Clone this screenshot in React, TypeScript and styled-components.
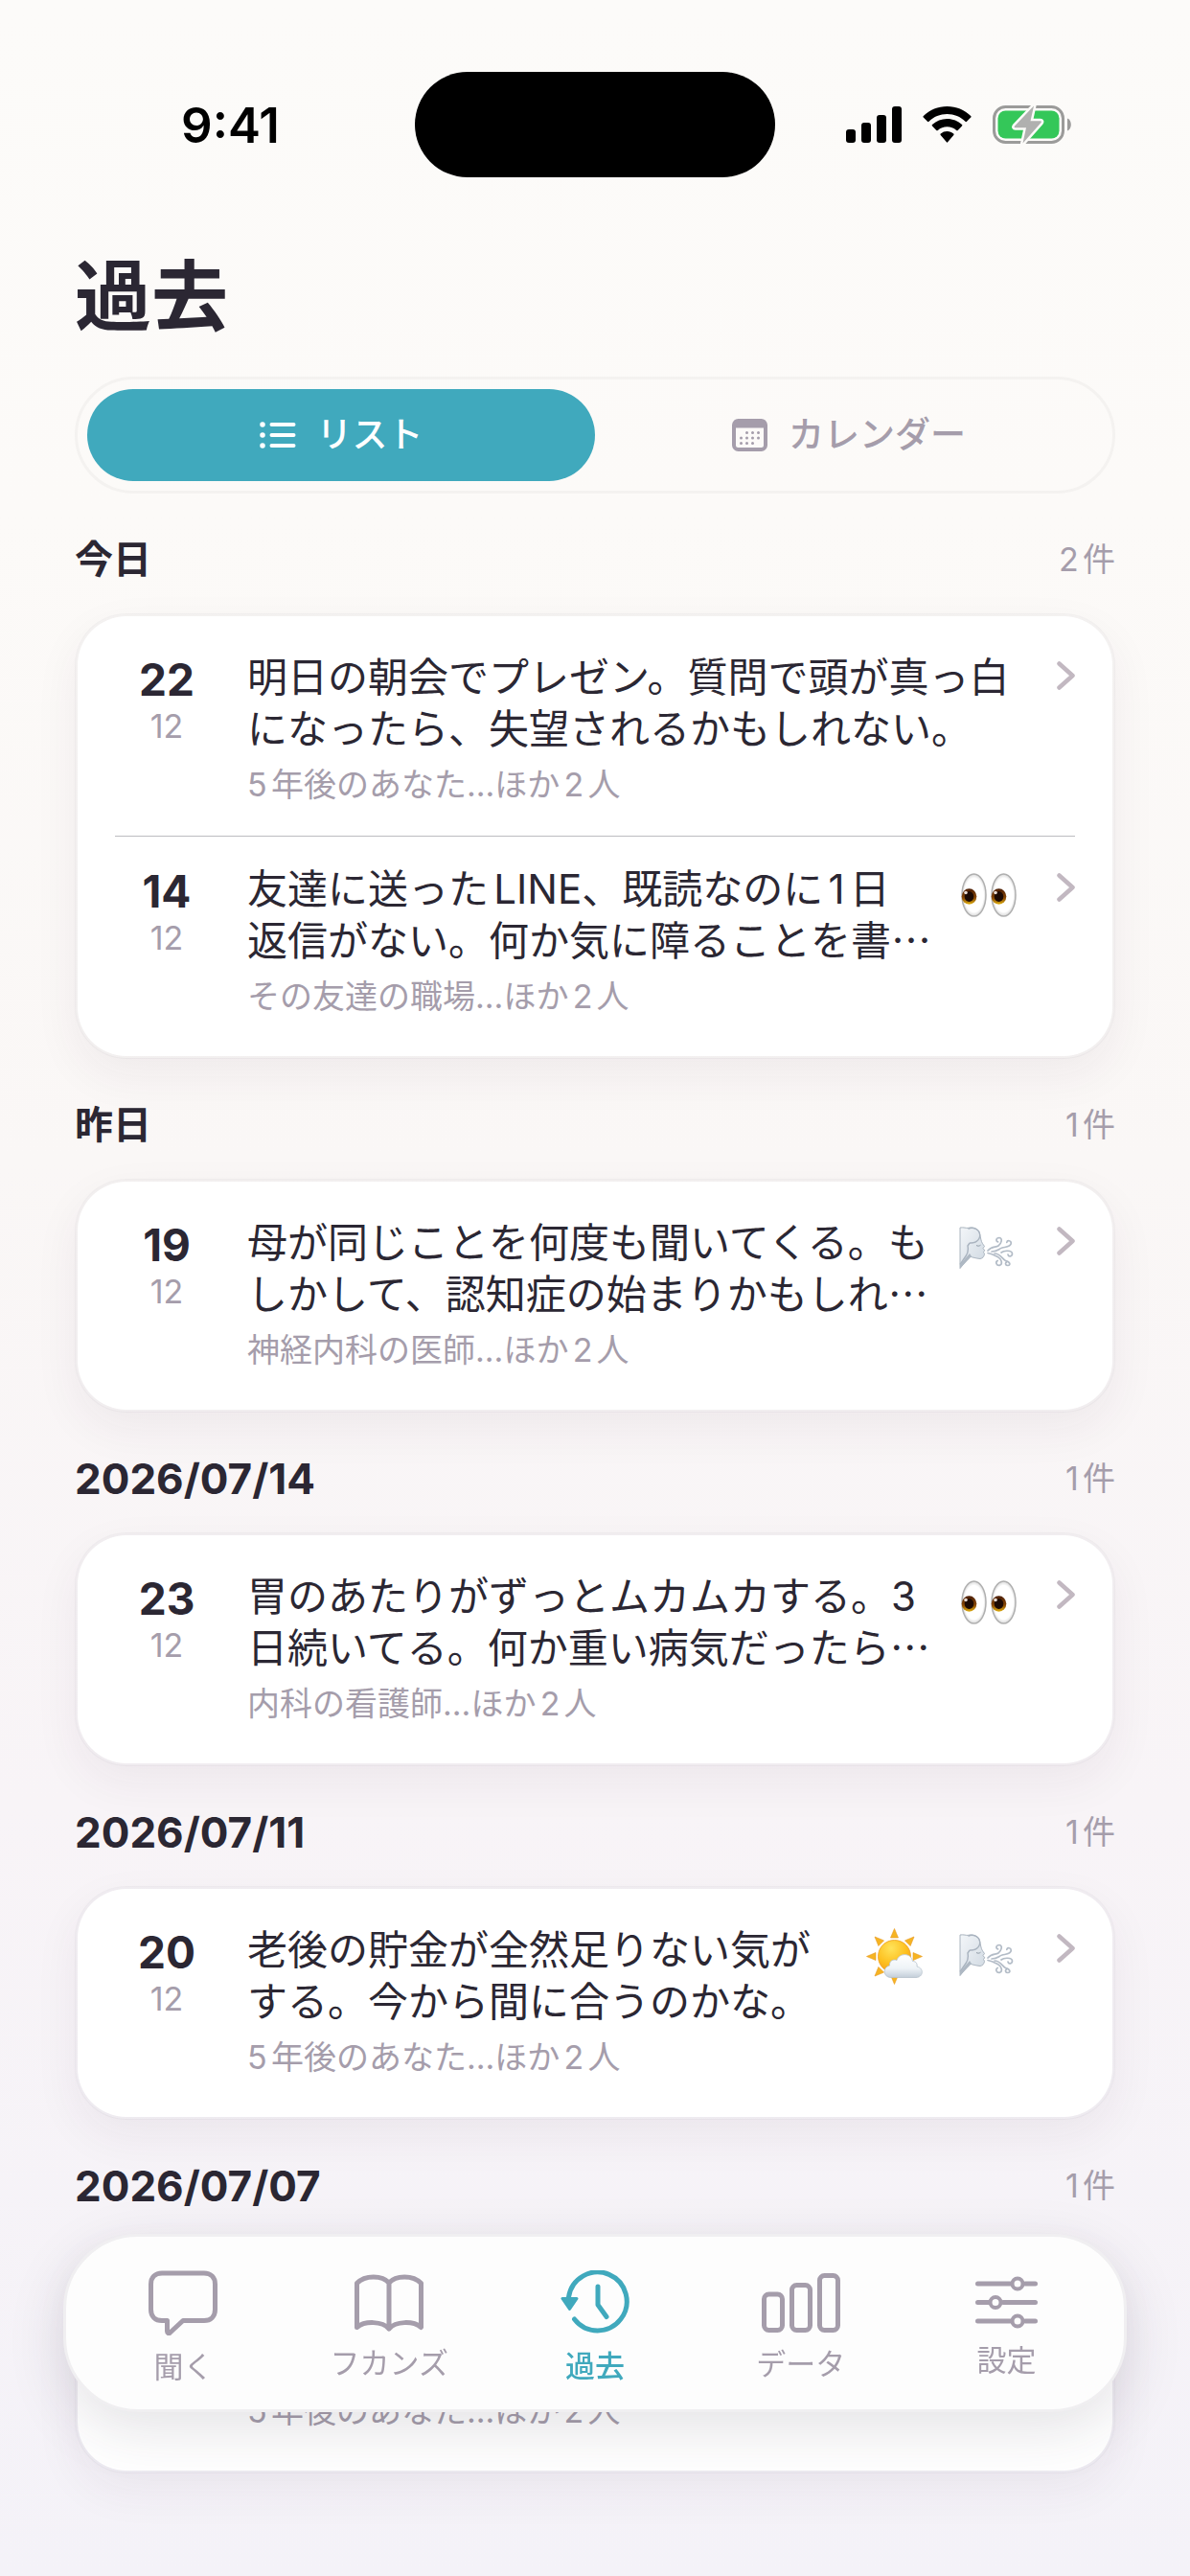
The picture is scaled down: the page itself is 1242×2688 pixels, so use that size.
import * as React from "react";
import styled, { createGlobalStyle } from "styled-components";

const ink = "#2b2733";
const muted = "#a59dab";
const accent = "#40a9bd";
const fontUI = `Inter, "Noto Sans CJK JP", sans-serif`;

const GlobalStyle = createGlobalStyle`
    *, *::before, *::after {
        box-sizing: border-box;
    }

    body {
        margin: 0;
        background: #f5f2f8;
        color: ${ink};
        font-family: ${fontUI};
        text-autospace: normal;
    }

    h1, h2, p, ul {
        margin: 0;
        padding: 0;
    }

    button, a {
        font-family: inherit;
        color: inherit;
    }
`;

const Screen = styled.div`
    position: relative;

    min-height: 100vh;
    padding-bottom: 108px;

    background: linear-gradient(#fcfbf9 0%, #fcfaf8 20%, #faf7f6 45%, #f8f4f7 70%, #f4f2f8 100%);
`;

const StatusBar = styled.header`
    display: grid;
    align-items: center;
    grid-template-columns: 1fr 376px 1fr;

    padding: 75px 0 70px;
`;

const Clock = styled.time`
    padding-left: 48px;

    text-align: center;

    color: #000;
    font-size: 51px;
    font-weight: 600;
`;

const Island = styled.div`
    height: 110px;

    border-radius: 55px;
    background: #000;
`;

const StatusIcons = styled.div`
    display: flex;
    align-items: center;
    gap: 22px;

    padding-left: 74px;
`;

const Main = styled.main`
    padding: 0 78px;
`;

const PageTitle = styled.h1`
    font-size: 80px;
    font-weight: 700;
    line-height: 108px;
`;

const Segments = styled.div`
    display: grid;
    grid-template-columns: 1fr 1fr;

    margin-top: 30px;
    padding: 10px;

    border: 3px solid rgba(60, 60, 60, 0.04);
    border-radius: 61px;
`;

const Segment = styled.button<{ $active?: boolean }>`
    display: flex;
    align-items: center;
    justify-content: center;
    gap: 22px;

    height: 96px;
    padding: 0;

    border: 0;
    border-radius: 48px;
    background: ${p => (p.$active ? accent : "transparent")};

    color: ${p => (p.$active ? "#fff" : muted)};
    font-size: 37px;
    font-weight: 500;
    line-height: 48px;
`;

const SectionHeader = styled.div`
    display: flex;
    align-items: center;
    justify-content: space-between;

    margin: 45px 0 32px;
`;

const SectionTitle = styled.h2<{ $numeric?: boolean }>`
    font-size: ${p => (p.$numeric ? 44 : 40)}px;
    font-weight: 700;
    line-height: 48px;
`;

const Count = styled.span`
    color: ${muted};
    font-size: 34px;
    line-height: 48px;
`;

const Card = styled.ul`
    padding: 9px 39px;

    list-style: none;

    border: 3px solid rgba(60, 60, 80, 0.04);
    border-radius: 54px;
    background: #fff;
    background-clip: padding-box;
    box-shadow: 0 18px 48px rgba(60, 40, 60, 0.06);
`;

const Item = styled.li`
    & + & {
        border-top: 1px solid #bdbcc0;
    }
`;

const RowLink = styled.a`
    display: flex;
    align-items: flex-start;

    padding: 28px 0 30px;

    text-decoration: none;
`;

const Time = styled.div`
    flex: none;

    width: 108px;
    margin-right: 30px;

    text-align: center;
`;

const Hour = styled.div`
    font-size: 46px;
    font-weight: 700;
    line-height: 58px;
`;

const Minute = styled.div`
    color: ${muted};
    font-size: 34px;
    line-height: 40px;
`;

const Body = styled.div`
    flex: 1;

    min-width: 0;
`;

const Worry = styled.p`
    font-size: 42px;
    line-height: 54px;
    white-space: pre-line;
`;

const Ellipsis = styled.span`
    font-family: "Noto Sans CJK JP", sans-serif;
    line-height: 1;
`;

const People = styled.p`
    margin-top: 8px;

    color: ${muted};
    font-size: 34px;
    line-height: 46px;
`;

const Moods = styled.div`
    display: flex;
    gap: 36px;

    margin: 0 42px 0 24px;
`;

const TabBar = styled.nav`
    position: fixed;
    right: 66px;
    bottom: 171px;
    left: 66px;

    display: grid;
    grid-template-columns: repeat(5, 1fr);

    height: 186px;
    padding: 8px 15px 0;

    border: 3px solid #f0eff1;
    border-radius: 78px;
    background: #fdfdfd;
    box-shadow: 0 18px 60px rgba(50, 40, 60, 0.13);
`;

const Tab = styled.a<{ $active?: boolean }>`
    display: flex;
    align-items: center;
    flex-direction: column;
    justify-content: center;
    gap: 15px;

    text-decoration: none;

    && {
        color: ${p => (p.$active ? accent : muted)};
    }

    font-size: 31px;
    font-weight: ${p => (p.$active ? 500 : 400)};
    line-height: 36px;
`;

const SignalIcon = () => (
    <svg width="58" height="38" viewBox="0 0 58 38">
        <rect x="0" y="24" width="10" height="14" rx="3" />
        <rect x="16" y="17" width="10" height="21" rx="3" />
        <rect x="32" y="9" width="10" height="29" rx="3" />
        <rect x="48" y="0" width="10" height="38" rx="3" />
    </svg>
);

const WifiIcon = () => (
    <svg width="51" height="38" viewBox="0 0 51 38">
        <path d="M25.500 0C35 0 43.600 3.700 50.200 9.900a1 1 0 0 1 0 1.500l-4.200 4.300a1 1 0 0 1-1.500 0C39.500 10.800 32.800 8 25.500 8S11.500 10.800 6.500 15.700a1 1 0 0 1-1.500 0L.8 11.400a1 1 0 0 1 0-1.500C7.400 3.700 16 0 25.500 0Z" />
        <path d="M25.500 13c6 0 11.400 2.300 15.500 6.100a1 1 0 0 1 0 1.500l-4.300 4.300a1 1 0 0 1-1.500 0 14.400 14.400 0 0 0-19.400 0 1 1 0 0 1-1.500 0L10 20.600a1 1 0 0 1 0-1.500A22.700 22.700 0 0 1 25.500 13Z" />
        <path d="M25.500 26c2.600 0 4.900.9 6.700 2.400.5.400.5 1 .1 1.500l-6 7.200a1 1 0 0 1-1.600 0l-6-7.200c-.4-.5-.4-1.100.1-1.500a10.500 10.500 0 0 1 6.700-2.400Z" />
    </svg>
);

const BatteryIcon = () => (
    <svg width="82" height="42" viewBox="0 0 82 42">
        <rect x="1.500" y="2.500" width="72" height="37" rx="12" fill="none" stroke="#9b9b9a" strokeWidth="3" />
        <path d="M78 14.500c2.600 1.200 3.800 3.600 3.800 6.500S80.600 26.300 78 27.500Z" fill="#9b9b9a" />
        <rect x="5.500" y="6.500" width="64" height="29" rx="8" fill="#34c759" />
        <path
            d="M43 1.500 23 22.500c-.8 1-.4 1.700.6 1.700H35L31.500 40.500 50.500 19c.8-1 .4-1.700-.6-1.700H39.500Z"
            fill="#b0b0af"
            stroke="#fcfbf9"
            strokeWidth="5"
            strokeLinejoin="round"
            paintOrder="stroke"
        />
    </svg>
);

const ListIcon = () => (
    <svg width="38" height="30" viewBox="0 0 38 30" fill="none" stroke="currentColor" strokeLinecap="round">
        <path d="M12.500 4h23M12.500 15h23M12.500 26h23" strokeWidth="4" />
        <path d="M3 4h.01M3 15h.01M3 26h.01" strokeWidth="5.500" />
    </svg>
);

const CalendarIcon = () => (
    <svg width="37" height="34" viewBox="0 0 37 34" fill="none" stroke="currentColor">
        <rect x="2" y="2" width="33" height="30" rx="4.500" strokeWidth="4" />
        <path d="M2.500 5.500h32" strokeWidth="8" />
        <path
            d="M15.500 14.500h.01M21.500 14.500h.01M27.500 14.500h.01M9.500 20h.01M15.500 20h.01M21.500 20h.01M27.500 20h.01M9.500 25.500h.01M15.500 25.500h.01M21.500 25.500h.01"
            strokeWidth="3"
            strokeLinecap="round"
        />
    </svg>
);

const ChevronIcon = styled(({ className }: { className?: string }) => (
    <svg className={className} width="19" height="30" viewBox="0 0 19 30" fill="none">
        <path d="M2.500 2.500 16.500 15l-14 12.500" stroke="#c2b8c1" strokeWidth="4.500" strokeLinecap="round" strokeLinejoin="round" />
    </svg>
))`
    flex: none;

    margin-top: 10px;
`;

const EyesIcon = () => (
    <svg width="61" height="60" viewBox="0 0 61 60">
        <defs>
            <radialGradient id="eyeball">
                <stop offset="0.800" stopColor="#fff" />
                <stop offset="1" stopColor="#d8d8d8" />
            </radialGradient>
            <linearGradient id="iris" x1="0" y1="0" x2="0" y2="1">
                <stop offset="0" stopColor="#4a1c04" />
                <stop offset="0.600" stopColor="#8a4a06" />
                <stop offset="1" stopColor="#e0b010" />
            </linearGradient>
        </defs>
        {[16.5, 47.5].map(cx => (
            <g key={cx}>
                <ellipse cx={cx} cy="33" rx="12.500" ry="22" fill="url(#eyeball)" stroke="#b0b0b0" strokeWidth="1.500" />
                <ellipse cx={cx - 5} cy="34.500" rx="7.800" ry="8.300" fill="url(#iris)" />
                <ellipse cx={cx - 5} cy="34.500" rx="4.800" ry="5.400" fill="#1d0b04" />
                <circle cx={cx - 8.5} cy="30.500" r="1.800" fill="#e8dcd4" />
            </g>
        ))}
    </svg>
);

const WindIcon = () => (
    <svg width="61" height="60" viewBox="0 0 61 60">
        <defs>
            <linearGradient id="face" x1="0" y1="0" x2="1" y2="1">
                <stop offset="0" stopColor="#f3f6f9" />
                <stop offset="1" stopColor="#cfd8e1" />
            </linearGradient>
        </defs>
        <path d="M2 11c4-.5 6.500.6 8 .4 6-1.400 12 1.200 12.600 6.600l1.400 6c.5 2.500 1.800 4 3.500 6.500l-1.500 2 1.700 2.300-1.200 1.700 1 2c-.5 2.500-1.500 4.500-4.500 5-4-.4-8.500-1.500-11-2.500L2 53.500Z" fill="url(#face)" stroke="#aab4bf" strokeWidth="1" />
        <path d="M12 27c5 .5 10.500-2 10.800-8.200C22.200 12 15 10 10.500 12.300M12 27l-2 3c1 5 0 7.500-1.500 10L2 49.500" fill="none" stroke="#a9b3bf" strokeWidth="1.400" />
        <path d="M2 53.500 14 41l-2-3L2 49.500Z" fill="#aeb8c3" />
        <path d="M19 29.500c1.500 1 3 .8 4.500-.3" fill="none" stroke="#8f9aa6" strokeWidth="1" />
        <path
            d="M31 35c4-5 8-3 11-5s5-8 1-8.500c-3.500 0-4 4-1.400 4.400M35 36c7 0 7-3 11-4s9-1 9.300-4.600c0-3.200-4-3.600-4.500-1M31 37.500c5 1 8 3 11 4.500s5 7 1.500 8.300c-3.500.7-5-3.300-2.300-4.800M38 38c6 0 8 5.500 11.500 7.500 5 1 5.500 5 2.500 5s-3-3-1.500-3.300M45 37c3-2.500 11-2.500 11.500 1 0 3.500-4 3.800-4.500 1"
            fill="none"
            stroke="#b3bcc7"
            strokeWidth="1.700"
            strokeLinecap="round"
        />
    </svg>
);

const SunIcon = () => (
    <svg width="61" height="64" viewBox="0 0 61 64">
        <defs>
            <radialGradient id="sun" cx="0.400" cy="0.250" r="0.800">
                <stop offset="0" stopColor="#ffe35a" />
                <stop offset="0.600" stopColor="#fdbf1e" />
                <stop offset="1" stopColor="#f39a1b" />
            </radialGradient>
            <linearGradient id="cloud" x1="0" y1="0" x2="0" y2="1">
                <stop offset="0" stopColor="#fff" />
                <stop offset="0.600" stopColor="#eef3f7" />
                <stop offset="1" stopColor="#c3ced9" />
            </linearGradient>
        </defs>
        <g fill="#f6b422" stroke="#e79a22" strokeWidth="0.600">
            {[0, 45, 90, 180, 225, 270, 315].map(angle => (
                <path key={angle} d="m30.500 4.500 4 9.500h-8Z" transform={`rotate(${angle} 30.500 33.500)`} />
            ))}
        </g>
        <circle cx="30.500" cy="33.500" r="17" fill="url(#sun)" stroke="#efa01c" strokeWidth="0.800" />
        <path d="M27 55.500c-8 0-9.500-10.500-1.500-12.500-.5-5 4-7 7.500-5.500 2.500-8 15-8 16.500 1 4 0 5 3 4.500 5.500 8 2 6.500 11.500-1 11.500Z" fill="url(#cloud)" stroke="#b6c1cc" strokeWidth="0.800" />
    </svg>
);

const moodIcons = { eyes: EyesIcon, wind: WindIcon, sun: SunIcon };

const AskIcon = () => (
    <svg width="72" height="68" viewBox="0 0 72 68" fill="none" stroke="currentColor" strokeWidth="5" strokeLinejoin="round">
        <path d="M14 3h44c7 0 11.500 4.500 11.500 11.500v26.500c0 7-4.500 11.500-11.500 11.500H36L22.500 65c-1.500 1.300-3 .5-3-1.500V52.500H14C7 52.500 2.500 48 2.500 41V14.500C2.500 7.500 7 3 14 3Z" />
    </svg>
);

const BookIcon = () => (
    <svg width="72" height="60" viewBox="0 0 72 60" fill="none" stroke="currentColor" strokeWidth="5" strokeLinejoin="round" strokeLinecap="round">
        <path d="M36 9C29 1 11 .5 2.500 9.500V55.500C11 48.500 29 49 36 57c7-8 25-8.500 33.500-1.500V9.500C61 .5 43 1 36 9ZM36 9v48" />
    </svg>
);

const HistoryIcon = () => (
    <svg width="72" height="67" viewBox="0 0 72 67" fill="none" stroke="currentColor" strokeWidth="5" strokeLinecap="round" strokeLinejoin="round">
        <path d="M8.500 28A30.500 30.500 0 1 1 14.500 51" />
        <path d="M39 17v19l9 12.500" />
        <path d="M2 29.500h15L9.500 40.500Z" fill="currentColor" strokeWidth="3" />
    </svg>
);

const DataIcon = () => (
    <svg width="82" height="62" viewBox="0 0 82 62" fill="none" stroke="currentColor" strokeWidth="5">
        <rect x="2.500" y="22" width="19" height="37.500" rx="5" />
        <rect x="31.500" y="12.500" width="19" height="47" rx="5" />
        <rect x="60.500" y="2.500" width="19" height="57" rx="5" />
    </svg>
);

const SettingsIcon = () => (
    <svg width="65" height="55" viewBox="0 0 65 55" fill="none" stroke="currentColor" strokeWidth="5" strokeLinecap="round">
        <path d="M2.500 8h34M52 8h10.500M2.500 27.500h11M29 27.500h33.500M2.500 47h34M52 47h10.500" />
        <circle cx="44" cy="8" r="5.500" strokeWidth="4" />
        <circle cx="21" cy="27.500" r="5.500" strokeWidth="4" />
        <circle cx="44" cy="47" r="5.500" strokeWidth="4" />
    </svg>
);

type Mood = keyof typeof moodIcons;

interface Entry {
    hour: number;
    minute: number;
    worry: string;
    clipped?: boolean;
    people: string;
    moods?: Mood[];
}

const sections: { title: string; numeric?: boolean; entries: Entry[] }[] = [
    {
        title: "今日",
        entries: [
            {
                hour: 22,
                minute: 12,
                worry: "明日の朝会でプレゼン。質問で頭が真っ白\nになったら、失望されるかもしれない。",
                people: "5年後のあなた...ほか2人"
            },
            {
                hour: 14,
                minute: 12,
                worry: "友達に送ったLINE、既読なのに1日\n返信がない。何か気に障ることを書",
                clipped: true,
                people: "その友達の職場...ほか2人",
                moods: ["eyes"]
            }
        ]
    },
    {
        title: "昨日",
        entries: [
            {
                hour: 19,
                minute: 12,
                worry: "母が同じことを何度も聞いてくる。も\nしかして、認知症の始まりかもしれ",
                clipped: true,
                people: "神経内科の医師...ほか2人",
                moods: ["wind"]
            }
        ]
    },
    {
        title: "2026/07/14",
        numeric: true,
        entries: [
            {
                hour: 23,
                minute: 12,
                worry: "胃のあたりがずっとムカムカする。3\n日続いてる。何か重い病気だったら",
                clipped: true,
                people: "内科の看護師...ほか2人",
                moods: ["eyes"]
            }
        ]
    },
    {
        title: "2026/07/11",
        numeric: true,
        entries: [
            {
                hour: 20,
                minute: 12,
                worry: "老後の貯金が全然足りない気が\nする。今から間に合うのかな。",
                people: "5年後のあなた...ほか2人",
                moods: ["sun", "wind"]
            }
        ]
    },
    {
        title: "2026/07/07",
        numeric: true,
        entries: [
            {
                hour: 21,
                minute: 12,
                worry: "転職するか迷っている。\n今の会社に残るべきかな。",
                people: "5年後のあなた...ほか2人"
            }
        ]
    }
];

const tabs = [
    { label: "聞く", icon: AskIcon },
    { label: "フカンズ", icon: BookIcon },
    { label: "過去", icon: HistoryIcon, active: true },
    { label: "データ", icon: DataIcon },
    { label: "設定", icon: SettingsIcon }
];

const EntryRow = ({ entry }: { entry: Entry }) => (
    <Item>
        <RowLink href="#">
            <Time>
                <Hour>{entry.hour}</Hour>
                <Minute>{entry.minute}</Minute>
            </Time>
            <Body>
                <Worry>
                    {entry.worry}
                    {entry.clipped && <Ellipsis>…</Ellipsis>}
                </Worry>
                <People>{entry.people}</People>
            </Body>
            {entry.moods && (
                <Moods>
                    {entry.moods.map(mood => {
                        const Icon = moodIcons[mood];
                        return <Icon key={mood} />;
                    })}
                </Moods>
            )}
            <ChevronIcon />
        </RowLink>
    </Item>
);

export default function App() {
    return (
        <Screen lang="ja">
            <GlobalStyle />
            <StatusBar>
                <Clock>9:41</Clock>
                <Island />
                <StatusIcons>
                    <SignalIcon />
                    <WifiIcon />
                    <BatteryIcon />
                </StatusIcons>
            </StatusBar>
            <Main>
                <PageTitle>過去</PageTitle>
                <Segments>
                    <Segment type="button" $active>
                        <ListIcon />
                        リスト
                    </Segment>
                    <Segment type="button">
                        <CalendarIcon />
                        カレンダー
                    </Segment>
                </Segments>
                {sections.map(section => (
                    <section key={section.title}>
                        <SectionHeader>
                            <SectionTitle $numeric={section.numeric}>{section.title}</SectionTitle>
                            <Count>{section.entries.length}件</Count>
                        </SectionHeader>
                        <Card>
                            {section.entries.map(entry => (
                                <EntryRow key={entry.hour} entry={entry} />
                            ))}
                        </Card>
                    </section>
                ))}
            </Main>
            <TabBar>
                {tabs.map(({ label, icon: Icon, active }) => (
                    <Tab key={label} href="#" $active={active}>
                        <Icon />
                        {label}
                    </Tab>
                ))}
            </TabBar>
        </Screen>
    );
}
